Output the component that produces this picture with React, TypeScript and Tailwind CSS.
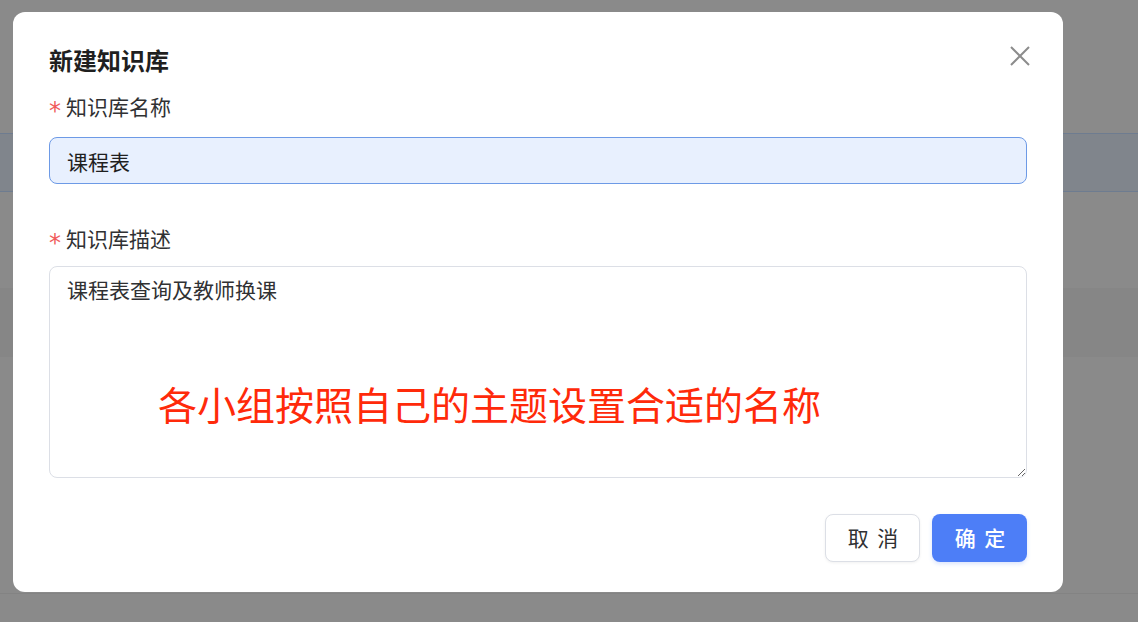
import { useState } from "react";

const CJK = "font-['Noto_Sans_CJK_SC','Noto_Sans',sans-serif]";

function Field({ label, children }: { label: string; children: React.ReactNode }) {
  return (
    <div>
      <div className="flex items-center h-[28px] text-[21px] leading-[28px] text-[#303133]">
        <span className="w-[17px] text-[24px] leading-[20px] text-[#f05b5b] pt-[9px] font-['DejaVu_Sans',sans-serif]">*</span>
        <span>{label}</span>
      </div>
      {children}
    </div>
  );
}

export default function App() {
  const [name, setName] = useState("课程表");
  const [desc, setDesc] = useState("课程表查询及教师换课");

  return (
    <div className={`relative h-[622px] w-full overflow-hidden bg-[#8a8a8a] ${CJK}`}>
      {/* dimmed page behind the dialog */}
      <div className="flex flex-col">
        <div className="h-[133px]" />
        <div className="h-[59px] bg-[#80858c] border-y border-[#6e7c90]" />
        <div className="h-[96px]" />
        <div className="h-[69px] bg-[#868686]" />
        <div className="h-[237px] border-b border-[#838383]" />
      </div>

      {/* dialog */}
      <div className="absolute left-[13px] top-[12px] w-[1050px] h-[580px] rounded-[12px] bg-white px-[36px] pt-[32px]">
        <button className="absolute right-[31px] top-[32px] p-[1px] text-[#8c8c8c]">
          <svg width="22" height="22" viewBox="0 0 22 22" fill="none" stroke="currentColor" strokeWidth="2">
            <path d="M2 2 L20 20 M20 2 L2 20" />
          </svg>
        </button>

        <h2 className="text-[24px] leading-[32px] font-bold text-[#1f1f1f]">新建知识库</h2>

        <div className="mt-[16px]">
          <Field label="知识库名称">
            <input
              value={name}
              onChange={(e) => setName(e.target.value)}
              className="mt-[17px] block w-full h-[47px] rounded-[8px] border border-[#6d9ae6] bg-[#e8f0fe] px-[17px] text-[21px] text-[#1f1f1f] outline-none"
            />
          </Field>
        </div>

        <div className="mt-[40px]">
          <Field label="知识库描述">
            <textarea
              value={desc}
              onChange={(e) => setDesc(e.target.value)}
              className="mt-[14px] block w-full h-[212px] rounded-[8px] border border-[#dcdfe6] bg-white px-[17px] pt-[8px] text-[21px] leading-[28px] text-[#303133] outline-none resize-y"
            />
          </Field>
        </div>

        <div className="mt-[36px] flex justify-end gap-[12px]">
          <button className="w-[95px] h-[48px] pl-[3px] rounded-[8px] border border-[#dcdfe6] bg-white text-[21px] tracking-[2px] text-[#303133] shadow-[0_1px_3px_rgba(0,0,0,0.06)]">
            取 消
          </button>
          <button className="w-[95px] h-[48px] pl-[3px] rounded-[8px] bg-[#4d7ef7] text-[21px] tracking-[2px] font-medium text-white shadow-[0_2px_4px_rgba(77,126,247,0.2)]">
            确 定
          </button>
        </div>

        {/* annotation over the form */}
        <div className="absolute left-[145px] top-[369px] text-[39px] leading-[44px] text-[#ff2a0a] whitespace-nowrap">
          各小组按照自己的主题设置合适的名称
        </div>
      </div>
    </div>
  );
}
